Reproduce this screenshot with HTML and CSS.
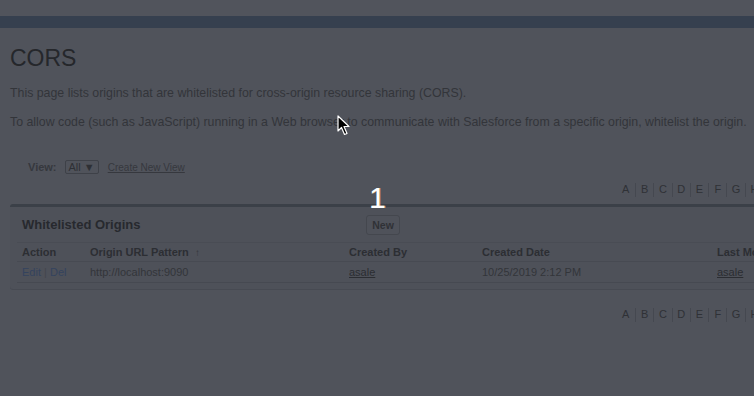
FILE: index.html
```html
<!DOCTYPE html>
<html lang="en">
<head>
    <meta charset="UTF-8">
    <title>CORS</title>
    <link rel="stylesheet" href="styles.css">
</head>
<body>
    <!-- Top bar -->
    <div class="topbar"></div>
    <div class="stripe"></div>

    <div class="page">
        <h1 class="page-title">CORS</h1>
        <p class="intro">This page lists origins that are whitelisted for cross-origin resource sharing (CORS).</p>
        <p class="intro">To allow code (such as JavaScript) running in a Web browser to communicate with Salesforce from a specific origin, whitelist the origin.</p>

        <!-- View filter -->
        <div class="view-bar">
            <span class="view-label">View:</span>
            <span class="view-select">All &#9660;</span>
            <a href="#" class="view-link">Create New View</a>
        </div>

        <div class="alpha">
            <span>A</span><span>B</span><span>C</span><span>D</span><span>E</span><span>F</span><span>G</span><span>H</span>
        </div>

        <!-- List block -->
        <div class="block">
            <div class="block-head">
                <h2>Whitelisted Origins</h2>
                <button class="btn">New</button>
            </div>
            <table class="list">
                <thead>
                    <tr>
                        <th class="c-action">Action</th>
                        <th class="c-url">Origin URL Pattern <span class="sort">&#8593;</span></th>
                        <th class="c-by">Created By</th>
                        <th class="c-date">Created Date</th>
                        <th class="c-mod">Last Modified By</th>
                    </tr>
                </thead>
                <tbody>
                    <tr>
                        <td><a href="#" class="act">Edit</a> <span class="pipe">|</span> <a href="#" class="act">Del</a></td>
                        <td>http://localhost:9090</td>
                        <td><a href="#" class="user">asale</a></td>
                        <td>10/25/2019 2:12 PM</td>
                        <td><a href="#" class="user">asale</a></td>
                    </tr>
                </tbody>
            </table>
        </div>

        <div class="alpha alpha-bottom">
            <span>A</span><span>B</span><span>C</span><span>D</span><span>E</span><span>F</span><span>G</span><span>H</span>
        </div>
    </div>

    <!-- Step marker and pointer -->
    <div class="step">1</div>
    <svg class="cursor" width="14" height="21" viewBox="0 0 14 21">
        <path d="M1 1 L1 16 L4.5 12.5 L7.5 19.5 L10 18.5 L7 11.5 L12 11.5 Z" fill="#000" stroke="#fff" stroke-width="1.2" stroke-linejoin="round"/>
    </svg>
</body>
</html>
```

FILE: styles.css
```css
/* Reset */
* {
    margin: 0;
    padding: 0;
    box-sizing: border-box;
}

body {
    font-family: 'Liberation Sans', Arial, sans-serif;
    background-color: #50535b;
    color: #2b2d32;
    width: 754px;
    height: 396px;
    overflow: hidden;
    position: relative;
}

/* Header */
.topbar {
    height: 16px;
    background-color: #51545c;
}

.stripe {
    height: 12px;
    background-color: #36404f;
}

.page {
    padding: 0 0 0 10px;
}

.page-title {
    font-size: 23px;
    font-weight: normal;
    color: #25272b;
    margin-top: 17px;
    line-height: 26px;
}

.intro {
    font-size: 12.35px;
    color: #33353a;
    margin-top: 15px;
    line-height: 14px;
}

.intro + .intro {
    margin-top: 15px;
}

/* View bar */
.view-bar {
    display: flex;
    align-items: center;
    margin: 30px 0 0 18px;
    height: 16px;
    font-size: 11px;
}

.view-label {
    font-weight: bold;
    color: #36383e;
    margin-right: 8px;
}

.view-select {
    border: 1px solid #3e4148;
    border-radius: 2px;
    padding: 0 3px;
    height: 14px;
    line-height: 12px;
    color: #2e3035;
    font-size: 11px;
    margin-right: 9px;
}

.view-link {
    color: #36383e;
    font-size: 10px;
}

/* Alphabet filter */
.alpha {
    display: flex;
    justify-content: flex-end;
    margin: 8px -9px 0 0;
    height: 14px;
    font-size: 11px;
    color: #2f3136;
}

.alpha span {
    width: 18.3px;
    text-align: center;
    border-left: 1px solid #454850;
    line-height: 13px;
}

.alpha span:first-child {
    border-left: none;
}

.alpha-bottom {
    margin-top: 19px;
}

/* List block */
.block {
    margin-top: 7px;
    width: 900px;
    border-top: 3px solid #3b4048;
    border-radius: 3px;
    background-color: #4e5159;
    padding: 0 0 6px 7px;
    box-shadow: 0 1px 0 #474a52;
}

.block-head {
    display: flex;
    align-items: center;
    height: 32px;
}

.block-head h2 {
    font-size: 13px;
    font-weight: bold;
    color: #27292e;
    width: 349px;
    padding-left: 5px;
    margin-top: 2px;
}

.btn {
    font-family: 'Liberation Sans', Arial, sans-serif;
    font-size: 10.5px;
    font-weight: bold;
    color: #2f3136;
    background-color: #4f525a;
    border: 1px solid #44474e;
    border-radius: 3px;
    width: 34px;
    height: 20px;
    margin-top: 4px;
}

.list {
    border-collapse: collapse;
    table-layout: fixed;
    width: 880px;
    margin-top: 3px;
}

.list th,
.list td {
    text-align: left;
    padding: 0 5px;
    font-size: 11px;
    white-space: nowrap;
    overflow: hidden;
}

.list th {
    height: 19px;
    font-weight: bold;
    color: #2c2e33;
    border-top: 1px solid #494c54;
    border-bottom: 1px solid #474a52;
}

.list td {
    height: 21px;
    color: #33353a;
    border-bottom: 1px solid #464951;
}

.c-action { width: 68px; }
.c-url { width: 259px; }
.c-by { width: 133px; }
.c-date { width: 235px; }

.sort {
    font-size: 10px;
    color: #33353a;
    margin-left: 3px;
}

.act {
    color: #34435e;
    text-decoration: none;
}

.pipe {
    color: #43464e;
}

.user {
    color: #2b2d32;
}

/* Overlay marks */
.step {
    position: absolute;
    left: 369px;
    top: 182px;
    font-family: 'Liberation Sans', sans-serif;
    font-size: 30px;
    line-height: 32px;
    color: #ffffff;
    text-shadow: 1px 0 0 #c9a27a;
}

.cursor {
    position: absolute;
    left: 337px;
    top: 115px;
}
```
